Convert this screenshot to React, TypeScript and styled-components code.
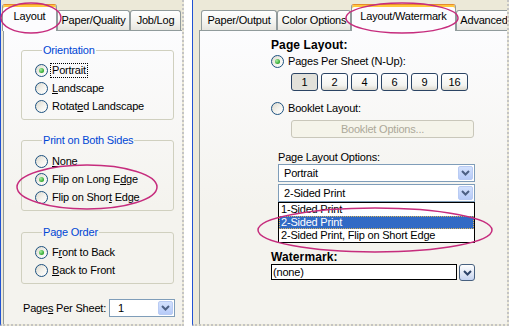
import React from 'react';
import styled, { createGlobalStyle } from 'styled-components';

const GlobalStyle = createGlobalStyle`
  html, body {
    margin: 0;
    padding: 0;
    background: #fff;
  }
  body {
    font-family: "Liberation Sans", Arial, sans-serif;
    font-size: 11px;
    letter-spacing: -0.2px;
    color: #000;
  }
`;

const Shot = styled.div`
  position: relative;
  display: flex;
  width: 509px;
  height: 326px;
  overflow: hidden;
  background: #fff;
`;

const Window = styled.div<{ $w: number; $ml?: number }>`
  flex: none;
  display: flex;
  flex-direction: column;
  box-sizing: border-box;
  width: ${p => p.$w}px;
  height: 326px;
  margin-left: ${p => p.$ml ?? 0}px;
  background: #ece9d8;
  border-left: 1px solid #2152d3;
  border-right: 2px dotted #c4c4c4;
  border-bottom: 2px dotted #c4c4c4;
  overflow: hidden;
`;

const TabStrip = styled.div<{ $pad: number }>`
  flex: none;
  display: flex;
  align-items: flex-end;
  height: 30px;
  padding-left: ${p => p.$pad}px;
`;

const Tab = styled.div<{ $w: number; $active?: boolean }>`
  flex: none;
  position: relative;
  z-index: ${p => (p.$active ? 2 : 1)};
  box-sizing: border-box;
  width: ${p => p.$w}px;
  height: ${p => (p.$active ? 27 : 20)}px;
  margin-bottom: ${p => (p.$active ? -1 : 0)}px;
  padding-top: ${p => (p.$active ? 4 : 2)}px;
  border: 1px solid #919b9c;
  border-top-color: ${p => (p.$active ? '#e68b2c' : '#919b9c')};
  border-bottom: none;
  border-radius: 3px 3px 0 0;
  box-shadow: ${p => (p.$active ? 'inset 0 2px 0 #ffc83c' : 'none')};
  background: ${p =>
    p.$active ? '#fcfcfe' : 'linear-gradient(#ffffff, #f3f3ef 60%, #e6e5de)'};
  line-height: 14px;
  text-align: center;
  white-space: nowrap;
  overflow: hidden;
`;

const Page = styled.div<{ $ml: number }>`
  flex: 1;
  display: flex;
  flex-direction: column;
  margin-left: ${p => p.$ml}px;
  border-top: 1px solid #919b9c;
  border-left: 1px solid #919b9c;
  background: linear-gradient(#fcfcfe, #f4f3ee 60%);
`;

const LeftContent = styled.div`
  display: flex;
  flex-direction: column;
  padding: 12px 8px 0 17px;
`;

const Group = styled.fieldset<{ $mt?: number; $pt?: number }>`
  margin: ${p => p.$mt ?? 0}px 0 0;
  padding: ${p => p.$pt ?? 4}px 0 4px 13px;
  min-width: 0;
  border: 1px solid #d0d0bf;
  border-radius: 3px;
`;

const Legend = styled.legend`
  margin-left: 7px;
  padding: 0 1px;
  line-height: 14px;
  color: #0046d5;
`;

const RadioRow = styled.div<{ $mt?: number }>`
  display: flex;
  align-items: center;
  gap: 3px;
  height: 18px;
  margin-top: ${p => p.$mt ?? 0}px;
  white-space: nowrap;
`;

const RadioDot = styled.span<{ $on?: boolean }>`
  flex: none;
  display: flex;
  align-items: center;
  justify-content: center;
  box-sizing: border-box;
  width: 13px;
  height: 13px;
  border-radius: 50%;
  border: 1px solid #1c5180;
  background: linear-gradient(135deg, #dcd9cd, #f4f3ee 55%, #ffffff);

  &::after {
    content: '';
    display: ${p => (p.$on ? 'block' : 'none')};
    width: 5px;
    height: 5px;
    border-radius: 50%;
    background: radial-gradient(circle at 35% 35%, #a6f0a0, #2fa52f 70%, #1d861d);
  }
`;

const RadioLabel = styled.span<{ $focus?: boolean }>`
  padding: 0 1px;
  line-height: 13px;
  outline: ${p => (p.$focus ? '1px dotted #000' : 'none')};
`;

const SheetRow = styled.div`
  display: flex;
  align-items: center;
  gap: 3px;
  margin: 15px 0 0 2px;
  white-space: nowrap;
`;

const Combo = styled.div<{ $w: number; $ml?: number; $mt?: number }>`
  flex: none;
  display: flex;
  align-items: stretch;
  box-sizing: border-box;
  width: ${p => p.$w}px;
  height: 18px;
  margin: ${p => p.$mt ?? 0}px 0 0 ${p => p.$ml ?? 0}px;
  padding: 1px;
  border: 1px solid #7f9db9;
  background: #fff;
`;

const ComboText = styled.span<{ $pl: number }>`
  flex: 1;
  padding-left: ${p => p.$pl}px;
  line-height: 14px;
`;

const DropBtn = styled.span`
  flex: none;
  display: flex;
  align-items: center;
  justify-content: center;
  box-sizing: border-box;
  width: 15px;
  border: 1px solid #b9cbf3;
  border-radius: 2px;
  background: linear-gradient(#d3e1fd, #b7cbf8);
`;

const RightContent = styled.div`
  display: flex;
  flex-direction: column;
  align-items: flex-start;
  padding: 7px 0 0 71px;
`;

const Title = styled.div<{ $mt?: number }>`
  margin-top: ${p => p.$mt ?? 0}px;
  font-size: 12px;
  font-weight: bold;
  letter-spacing: 0.1px;
  line-height: 14px;
`;

const NumRow = styled.div`
  display: flex;
  gap: 3px;
  margin: 3px 0 0 20px;
`;

const NumButton = styled.button<{ $pressed?: boolean }>`
  box-sizing: border-box;
  width: 27px;
  height: 18px;
  padding: 0;
  border: 1px solid #2b4464;
  border-radius: 3px;
  font: inherit;
  letter-spacing: inherit;
  color: #000;
  background: ${p =>
    p.$pressed ? '#e2e1da' : 'linear-gradient(#ffffff, #f4f4f0 70%, #dcd8cc)'};
`;

const BookletButton = styled.button`
  box-sizing: border-box;
  width: 183px;
  height: 18px;
  margin: 3px 0 0 20px;
  padding: 0;
  border: 1px solid #c9c7ba;
  border-radius: 3px;
  background: #f5f4ea;
  font: inherit;
  letter-spacing: inherit;
  color: #aca899;
`;

const FieldLabel = styled.div`
  margin: 12px 0 0 7px;
  line-height: 14px;
`;

const DropList = styled.div`
  box-sizing: border-box;
  width: 197px;
  margin-left: 7px;
  border: 1px solid #000;
  background: #fff;
`;

const ListItem = styled.div<{ $sel?: boolean }>`
  box-sizing: border-box;
  height: 13px;
  padding-left: 2px;
  line-height: 13px;
  color: ${p => (p.$sel ? '#fff' : '#000')};
  background: ${p => (p.$sel ? '#316ac5' : 'transparent')};
  outline: ${p => (p.$sel ? '1px dotted #d8b45c' : 'none')};
  outline-offset: -1px;
  white-space: nowrap;
`;

const WatermarkRow = styled.div`
  display: flex;
  gap: 2px;
`;

const TextBox = styled.div`
  box-sizing: border-box;
  width: 186px;
  height: 16px;
  padding-left: 1px;
  border: 1px solid #000;
  background: #fff;
  line-height: 14px;
`;

const ArrowButton = styled.div`
  display: flex;
  align-items: center;
  justify-content: center;
  box-sizing: border-box;
  width: 16px;
  height: 17px;
  border: 1px solid #47607f;
  border-radius: 3px;
  background: linear-gradient(#ffffff, #dfe6f5 60%, #c4d2f0);
`;

const Annotations = styled.svg`
  position: absolute;
  left: 0;
  top: 0;
  pointer-events: none;
  z-index: 10;
`;

const Chevron = ({ color = '#4d6185' }: { color?: string }) => (
  <svg width="9" height="6" viewBox="0 0 9 6">
    <path d="M1 1 L4.5 4.5 L8 1" stroke={color} strokeWidth="2" fill="none" />
  </svg>
);

const Radio = ({
  on,
  focus,
  mt,
  children,
}: {
  on?: boolean;
  focus?: boolean;
  mt?: number;
  children: React.ReactNode;
}) => (
  <RadioRow $mt={mt}>
    <RadioDot $on={on} />
    <RadioLabel $focus={focus}>{children}</RadioLabel>
  </RadioRow>
);

const sheets = ['1', '2', '4', '6', '9', '16'];

export default function App() {
  return (
    <Shot>
      <GlobalStyle />

      <Window $w={184}>
        <TabStrip $pad={1}>
          <Tab $w={55} $active>Layout</Tab>
          <Tab $w={73}>Paper/Quality</Tab>
          <Tab $w={51}>Job/Log</Tab>
        </TabStrip>
        <Page $ml={2}>
          <LeftContent>
            <Group>
              <Legend>Orientation</Legend>
              <Radio on focus>Portrait</Radio>
              <Radio><u>L</u>andscape</Radio>
              <Radio>Rotat<u>e</u>d Landscape</Radio>
            </Group>
            <Group $mt={13} $pt={5}>
              <Legend>Print on Both Sides</Legend>
              <Radio><u>N</u>one</Radio>
              <Radio on>Flip on Long E<u>d</u>ge</Radio>
              <Radio>Flip on Shor<u>t</u> Edge</Radio>
            </Group>
            <Group $mt={14}>
              <Legend>Page Order</Legend>
              <Radio on>F<u>r</u>ont to Back</Radio>
              <Radio><u>B</u>ack to Front</Radio>
            </Group>
            <SheetRow>
              <span>Page<u>s</u> Per Sheet:</span>
              <Combo $w={66}>
                <ComboText $pl={7}>1</ComboText>
                <DropBtn>
                  <Chevron />
                </DropBtn>
              </Combo>
            </SheetRow>
          </LeftContent>
        </Page>
      </Window>

      <Window $w={317} $ml={8}>
        <TabStrip $pad={8}>
          <Tab $w={76}>Paper/Output</Tab>
          <Tab $w={74}>Color Options</Tab>
          <Tab $w={105} $active>Layout/Watermark</Tab>
          <Tab $w={56}>Advanced</Tab>
        </TabStrip>
        <Page $ml={6}>
          <RightContent>
            <Title>Page Layout:</Title>
            <Radio on>Pages Per Sheet (N-Up):</Radio>
            <NumRow>
              {sheets.map((n, i) => (
                <NumButton key={n} $pressed={i === 0}>
                  {n}
                </NumButton>
              ))}
            </NumRow>
            <Radio mt={8}>Booklet Layout:</Radio>
            <BookletButton disabled>Booklet Options...</BookletButton>
            <FieldLabel>Page Layout Options:</FieldLabel>
            <Combo $w={197} $ml={7}>
              <ComboText $pl={4}>Portrait</ComboText>
              <DropBtn>
                <Chevron />
              </DropBtn>
            </Combo>
            <Combo $w={197} $ml={7} $mt={2}>
              <ComboText $pl={4}>2-Sided Print</ComboText>
              <DropBtn>
                <Chevron />
              </DropBtn>
            </Combo>
            <DropList>
              <ListItem>1-Sided Print</ListItem>
              <ListItem $sel>2-Sided Print</ListItem>
              <ListItem>2-Sided Print, Flip on Short Edge</ListItem>
            </DropList>
            <Title $mt={7}>Watermark:</Title>
            <WatermarkRow>
              <TextBox>(none)</TextBox>
              <ArrowButton>
                <Chevron color="#2e4469" />
              </ArrowButton>
            </WatermarkRow>
          </RightContent>
        </Page>
      </Window>

      <Annotations width="509" height="326" viewBox="0 0 509 326">
        <g fill="none" stroke="#c62c7d" strokeWidth="1.5">
          <ellipse cx="31" cy="18" rx="30" ry="15" />
          <ellipse cx="87" cy="187" rx="70" ry="22" />
          <ellipse cx="402" cy="18" rx="56" ry="15" />
          <ellipse cx="375" cy="230" rx="117" ry="22" />
        </g>
      </Annotations>
    </Shot>
  );
}
